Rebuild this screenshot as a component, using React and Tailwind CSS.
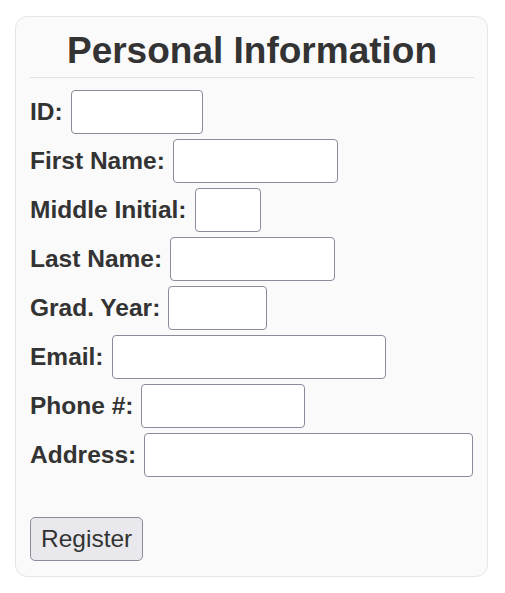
export default function App() {
  const fields = [
    { label: 'ID:', w: 'w-[132px]' },
    { label: 'First Name:', w: 'w-[165px]' },
    { label: 'Middle Initial:', w: 'w-[66px]' },
    { label: 'Last Name:', w: 'w-[165px]' },
    { label: 'Grad. Year:', w: 'w-[99px]' },
    { label: 'Email:', w: 'w-[274px]' },
    { label: 'Phone #:', w: 'w-[164px]' },
    { label: 'Address:', w: 'w-[329px]' },
  ];

  return (
    <div className="bg-white min-h-[593px] pt-[16px] pl-[15px] font-['Liberation_Sans',Arial,sans-serif] text-[#333]">
      <div className="w-[473px] bg-[#fafafa] border border-[#e5e5e5] rounded-[12px] pt-[12px] pb-[15px] pl-[14px] pr-[13px]">
        <h1 className="text-center text-[37px] leading-[43px] font-bold">Personal Information</h1>
        <div className="h-px bg-[#e3e3e3] mt-[5px] mb-[12px]" />
        <form className="flex flex-col gap-[5px]">
          {fields.map((f) => (
            <div key={f.label} className="flex items-center gap-[8px]">
              <label className="text-[24.5px] font-bold leading-none">{f.label}</label>
              <input
                type="text"
                className={`${f.w} h-[44px] bg-white border border-[#8f8a9b] rounded-[4px]`}
              />
            </div>
          ))}
          <div className="mt-[35px]">
            <button
              type="button"
              className="h-[44px] px-[10px] text-[24.5px] bg-[#e9e9ed] border border-[#8f8a9b] rounded-[5px] text-[#333]"
            >
              Register
            </button>
          </div>
        </form>
      </div>
    </div>
  );
}
